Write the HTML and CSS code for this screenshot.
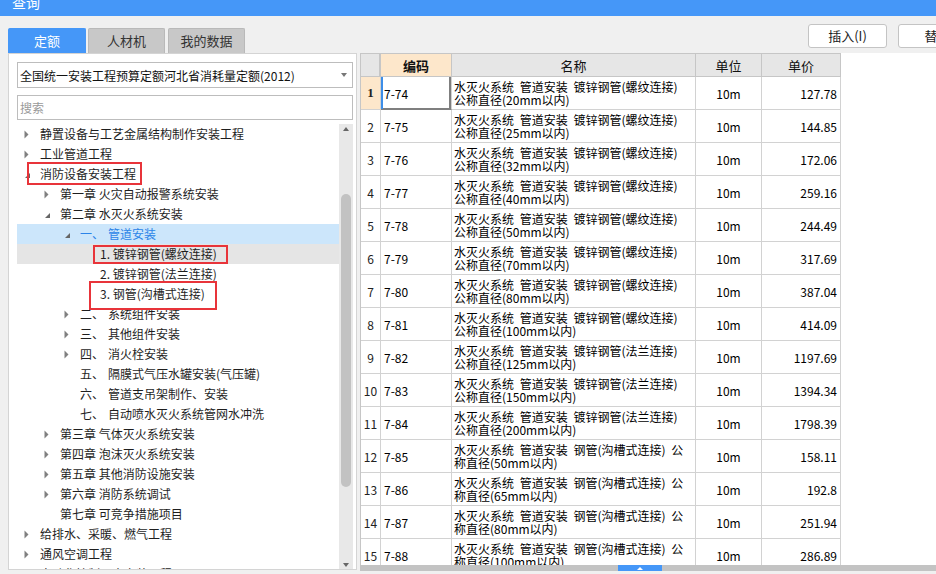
FILE: index.html
```html
<!DOCTYPE html>
<html lang="zh-CN">
<head>
<meta charset="utf-8">
<title>查询</title>
<link rel="stylesheet" href="styles.css">
</head>
<body>
<div class="titlebar"><span class="title-text">查询</span></div>
<div class="main">
  <div class="left">
    <div class="tabs">
      <div class="tab active">定额</div>
      <div class="tab">人材机</div>
      <div class="tab">我的数据</div>
    </div>
    <div class="panel">
      <div class="select"><span>全国统一安装工程预算定额河北省消耗量定额(2012)</span><i class="caret"></i></div>
      <div class="search">搜索</div>
      <div class="treebox">
        <div class="tree">
          <div class="row l0"><svg class="tg" width="16" height="20"><path d="M0.5 6.5 L4.5 10.5 L0.5 14.5 Z" fill="#808080"/></svg><span>静置设备与工艺金属结构制作安装工程</span></div>
          <div class="row l0"><svg class="tg" width="16" height="20"><path d="M0.5 6.5 L4.5 10.5 L0.5 14.5 Z" fill="#808080"/></svg><span>工业管道工程</span></div>
          <div class="row l0"><svg class="tg" width="16" height="20"><path d="M6 9 L6 14 L1 14 Z" fill="#666"/></svg><span>消防设备安装工程</span></div>
          <div class="row l1"><svg class="tg" width="16" height="20"><path d="M0.5 6.5 L4.5 10.5 L0.5 14.5 Z" fill="#808080"/></svg><span>第一章 火灾自动报警系统安装</span></div>
          <div class="row l1"><svg class="tg" width="16" height="20"><path d="M6 9 L6 14 L1 14 Z" fill="#666"/></svg><span>第二章 水灭火系统安装</span></div>
          <div class="row l2 sel"><svg class="tg" width="16" height="20"><path d="M6 9 L6 14 L1 14 Z" fill="#666"/></svg><span class="ord">一、</span><span>管道安装</span></div>
          <div class="row l3 hov"><i class="sp"></i><span>1. 镀锌钢管(螺纹连接)</span></div>
          <div class="row l3"><i class="sp"></i><span>2. 镀锌钢管(法兰连接)</span></div>
          <div class="row l3"><i class="sp"></i><span>3. 钢管(沟槽式连接)</span></div>
          <div class="row l2"><svg class="tg" width="16" height="20"><path d="M0.5 6.5 L4.5 10.5 L0.5 14.5 Z" fill="#808080"/></svg><span class="ord">二、</span><span>系统组件安装</span></div>
          <div class="row l2"><svg class="tg" width="16" height="20"><path d="M0.5 6.5 L4.5 10.5 L0.5 14.5 Z" fill="#808080"/></svg><span class="ord">三、</span><span>其他组件安装</span></div>
          <div class="row l2"><svg class="tg" width="16" height="20"><path d="M0.5 6.5 L4.5 10.5 L0.5 14.5 Z" fill="#808080"/></svg><span class="ord">四、</span><span>消火栓安装</span></div>
          <div class="row l2"><i class="sp"></i><span class="ord">五、</span><span>隔膜式气压水罐安装(气压罐)</span></div>
          <div class="row l2"><i class="sp"></i><span class="ord">六、</span><span>管道支吊架制作、安装</span></div>
          <div class="row l2"><i class="sp"></i><span class="ord">七、</span><span>自动喷水灭火系统管网水冲洗</span></div>
          <div class="row l1"><svg class="tg" width="16" height="20"><path d="M0.5 6.5 L4.5 10.5 L0.5 14.5 Z" fill="#808080"/></svg><span>第三章 气体灭火系统安装</span></div>
          <div class="row l1"><svg class="tg" width="16" height="20"><path d="M0.5 6.5 L4.5 10.5 L0.5 14.5 Z" fill="#808080"/></svg><span>第四章 泡沫灭火系统安装</span></div>
          <div class="row l1"><svg class="tg" width="16" height="20"><path d="M0.5 6.5 L4.5 10.5 L0.5 14.5 Z" fill="#808080"/></svg><span>第五章 其他消防设施安装</span></div>
          <div class="row l1"><svg class="tg" width="16" height="20"><path d="M0.5 6.5 L4.5 10.5 L0.5 14.5 Z" fill="#808080"/></svg><span>第六章 消防系统调试</span></div>
          <div class="row l1"><i class="sp"></i><span>第七章 可竞争措施项目</span></div>
          <div class="row l0"><svg class="tg" width="16" height="20"><path d="M0.5 6.5 L4.5 10.5 L0.5 14.5 Z" fill="#808080"/></svg><span>给排水、采暖、燃气工程</span></div>
          <div class="row l0"><svg class="tg" width="16" height="20"><path d="M0.5 6.5 L4.5 10.5 L0.5 14.5 Z" fill="#808080"/></svg><span>通风空调工程</span></div>
          <div class="row l0"><svg class="tg" width="16" height="20"><path d="M0.5 6.5 L4.5 10.5 L0.5 14.5 Z" fill="#808080"/></svg><span>自动化控制仪表安装工程</span></div>
        </div>
        <div class="vscroll">
          <i class="arr-up"></i>
          <div class="thumb"></div>
          <i class="arr-down"></i>
        </div>
      </div>
      <div class="mark m1"></div>
      <div class="mark m2"></div>
      <div class="mark m3"></div>
    </div>
  </div>
  <div class="right">
    <div class="toolbar">
      <div class="btn">插入(I)</div>
      <div class="btn">替换</div>
    </div>
    <div class="gridwrap">
      <div class="grid">
        <div class="c h hn"></div>
        <div class="c h k">编码</div>
        <div class="c h">名称</div>
        <div class="c h">单位</div>
        <div class="c h">单价</div>

        <div class="c n on">1</div><div class="c code cur">7-74</div><div class="c name"><p>水灭火系统 管道安装 镀锌钢管(螺纹连接)<br>公称直径(20mm以内)</p></div><div class="c unit">10m</div><div class="c price">127.78</div>
        <div class="c n">2</div><div class="c code">7-75</div><div class="c name"><p>水灭火系统 管道安装 镀锌钢管(螺纹连接)<br>公称直径(25mm以内)</p></div><div class="c unit">10m</div><div class="c price">144.85</div>
        <div class="c n">3</div><div class="c code">7-76</div><div class="c name"><p>水灭火系统 管道安装 镀锌钢管(螺纹连接)<br>公称直径(32mm以内)</p></div><div class="c unit">10m</div><div class="c price">172.06</div>
        <div class="c n">4</div><div class="c code">7-77</div><div class="c name"><p>水灭火系统 管道安装 镀锌钢管(螺纹连接)<br>公称直径(40mm以内)</p></div><div class="c unit">10m</div><div class="c price">259.16</div>
        <div class="c n">5</div><div class="c code">7-78</div><div class="c name"><p>水灭火系统 管道安装 镀锌钢管(螺纹连接)<br>公称直径(50mm以内)</p></div><div class="c unit">10m</div><div class="c price">244.49</div>
        <div class="c n">6</div><div class="c code">7-79</div><div class="c name"><p>水灭火系统 管道安装 镀锌钢管(螺纹连接)<br>公称直径(70mm以内)</p></div><div class="c unit">10m</div><div class="c price">317.69</div>
        <div class="c n">7</div><div class="c code">7-80</div><div class="c name"><p>水灭火系统 管道安装 镀锌钢管(螺纹连接)<br>公称直径(80mm以内)</p></div><div class="c unit">10m</div><div class="c price">387.04</div>
        <div class="c n">8</div><div class="c code">7-81</div><div class="c name"><p>水灭火系统 管道安装 镀锌钢管(螺纹连接)<br>公称直径(100mm以内)</p></div><div class="c unit">10m</div><div class="c price">414.09</div>
        <div class="c n">9</div><div class="c code">7-82</div><div class="c name"><p>水灭火系统 管道安装 镀锌钢管(法兰连接)<br>公称直径(125mm以内)</p></div><div class="c unit">10m</div><div class="c price">1197.69</div>
        <div class="c n">10</div><div class="c code">7-83</div><div class="c name"><p>水灭火系统 管道安装 镀锌钢管(法兰连接)<br>公称直径(150mm以内)</p></div><div class="c unit">10m</div><div class="c price">1394.34</div>
        <div class="c n">11</div><div class="c code">7-84</div><div class="c name"><p>水灭火系统 管道安装 镀锌钢管(法兰连接)<br>公称直径(200mm以内)</p></div><div class="c unit">10m</div><div class="c price">1798.39</div>
        <div class="c n">12</div><div class="c code">7-85</div><div class="c name"><p>水灭火系统 管道安装 钢管(沟槽式连接) 公<br>称直径(50mm以内)</p></div><div class="c unit">10m</div><div class="c price">158.11</div>
        <div class="c n">13</div><div class="c code">7-86</div><div class="c name"><p>水灭火系统 管道安装 钢管(沟槽式连接) 公<br>称直径(65mm以内)</p></div><div class="c unit">10m</div><div class="c price">192.8</div>
        <div class="c n">14</div><div class="c code">7-87</div><div class="c name"><p>水灭火系统 管道安装 钢管(沟槽式连接) 公<br>称直径(80mm以内)</p></div><div class="c unit">10m</div><div class="c price">251.94</div>
        <div class="c n">15</div><div class="c code">7-88</div><div class="c name"><p>水灭火系统 管道安装 钢管(沟槽式连接) 公<br>称直径(100mm以内)</p></div><div class="c unit">10m</div><div class="c price">286.89</div>
      </div>
    </div>
    <div class="hbar"><span class="hthumb"><i></i></span></div>
  </div>
</div>
</body>
</html>
```

FILE: styles.css
```css
* { box-sizing: border-box; margin: 0; padding: 0; }
html, body { width: 936px; height: 574px; overflow: hidden; }
body {
  background: #f0f0f0;
  font-family: "Noto Sans CJK SC", "Microsoft YaHei", sans-serif;
  font-size: 12px;
  color: #222;
}

.titlebar { height: 16px; background: #4597f8; overflow: hidden; padding-left: 12px; }
.title-text { display: block; margin-top: -5px; line-height: 14px; font-size: 14px; color: #fff; }

.main { display: flex; height: 558px; }

.left { width: 360px; flex: none; display: flex; flex-direction: column; padding-top: 12px; }
.tabs { display: flex; height: 25px; padding-left: 8px; flex: none; }
.tab {
  width: 77px; height: 25px; margin-right: 3px;
  background: #c8c8c8; border: 1px solid #b9b9b9; border-bottom: none;
  border-radius: 2px 2px 0 0;
  font-size: 13px; line-height: 24px; text-align: center; color: #333;
}
.tab.active { width: 78px; margin-right: 2px; background: #4597f8; border-color: #4597f8; color: #fff; }

.panel {
  position: relative;
  margin-left: 8px; width: 349px; height: 517px; flex: none;
  background: #fff; border: 1px solid #d4d4d4;
  padding: 8px 3px 0 8px;
  display: flex; flex-direction: column;
}
.select {
  height: 26px; flex: none;
  border: 1px solid #bdbdbd;
  display: flex; align-items: center; justify-content: space-between;
  padding: 0 5px 0 2px; color: #111;
}
.caret { width: 0; height: 0; border-left: 3px solid transparent; border-right: 3px solid transparent; border-top: 4px solid #777; }
.search {
  margin-top: 7px; height: 25px; flex: none;
  border: 1px solid #bdbdbd; line-height: 23px; padding-left: 2px; color: #9a9a9a;
}
.treebox { margin-top: 4px; flex: 1; min-height: 0; display: flex; overflow: hidden; }
.tree { width: 322px; flex: none; }
.row { height: 20px; display: flex; align-items: center; white-space: nowrap; line-height: 20px; color: #1e1e1e; }
.row .tg { flex: none; display: block; }
.row .sp { flex: none; display: block; width: 16px; height: 20px; }
.l0 { padding-left: 7px; }
.l1 { padding-left: 27px; }
.l2 { padding-left: 47px; }
.l3 { padding-left: 67px; }
.ord { display: inline-block; width: 28px; }
.sel { background: #cce6fb; color: #2b84e8; }
.hov { background: #e5e5e5; }

.vscroll {
  width: 14px; flex: none; background: #e8e8e8;
  display: flex; flex-direction: column; align-items: center;
  padding: 3px 0 2px;
}
.arr-up { display: block; width: 0; height: 0; border-left: 3.5px solid transparent; border-right: 3.5px solid transparent; border-bottom: 4px solid #666; }
.arr-down { display: block; margin-top: auto; width: 0; height: 0; border-left: 3.5px solid transparent; border-right: 3.5px solid transparent; border-top: 4px solid #666; }
.thumb { margin-top: 63px; width: 10px; height: 293px; border-radius: 5px; background: #c2c2c2; }

.mark { position: absolute; border: 2px solid #e8343a; }
.m1 { left: 18px; top: 108px; width: 115px; height: 23px; }
.m2 { left: 84px; top: 191px; width: 135px; height: 19px; }
.m3 { left: 80px; top: 227px; width: 128px; height: 29px; }

.right { flex: 1; min-width: 0; display: flex; flex-direction: column; overflow: hidden; }
.toolbar { height: 37px; flex: none; display: flex; gap: 11px; padding: 8px 0 0 448px; }
.btn {
  flex: none; width: 79px; height: 24px;
  background: #fff; border: 1px solid #c4c4c4; border-radius: 3px;
  font-size: 13px; line-height: 22px; text-align: center; color: #222;
}
.gridwrap { height: 512px; flex: none; background: #fff; overflow: hidden; }
.grid {
  display: grid;
  grid-template-columns: 20px 71px 244px 66px 79px;
  grid-template-rows: 23px;
  grid-auto-rows: 33px;
  width: 481px;
  border-top: 1px solid #c6c6c6; border-left: 1px solid #c6c6c6;
  color: #000;
}
.c { border-right: 1px solid #d2d2d2; border-bottom: 1px solid #d2d2d2; display: flex; align-items: center; overflow: hidden; white-space: nowrap; }
.h { background: #e6e6e6; justify-content: center; font-size: 13px; color: #111; border-color: #c6c6c6; }
.h.hn { border-right: 2px solid #c6c6c6; }
.h.k { background: #fde7cb; font-weight: bold; }
.n { justify-content: center; color: #222; }
.n.on { background: #fde7cb; font-weight: bold; font-family: "Liberation Serif", serif; font-size: 13px; }
.code { padding-left: 3px; }
.cur { box-shadow: inset 2px 0 0 #3d8ee8, inset -2px 0 0 #7f7f7f, inset 0 -1px 0 #7f7f7f; border-bottom-color: #7f7f7f; }
.name { padding-left: 2px; }
.name p { line-height: 13px; word-spacing: 3px; }
.unit { justify-content: center; }
.price { justify-content: flex-end; padding-right: 3px; }

.hbar { height: 6px; flex: none; background: #c3c3c3; padding-left: 258px; }
.hthumb { width: 44px; height: 6px; background: #4597f8; display: flex; justify-content: center; align-items: center; }
.hthumb i { display: block; width: 0; height: 0; border-left: 3px solid transparent; border-right: 3px solid transparent; border-bottom: 3px solid #fff; }
```
